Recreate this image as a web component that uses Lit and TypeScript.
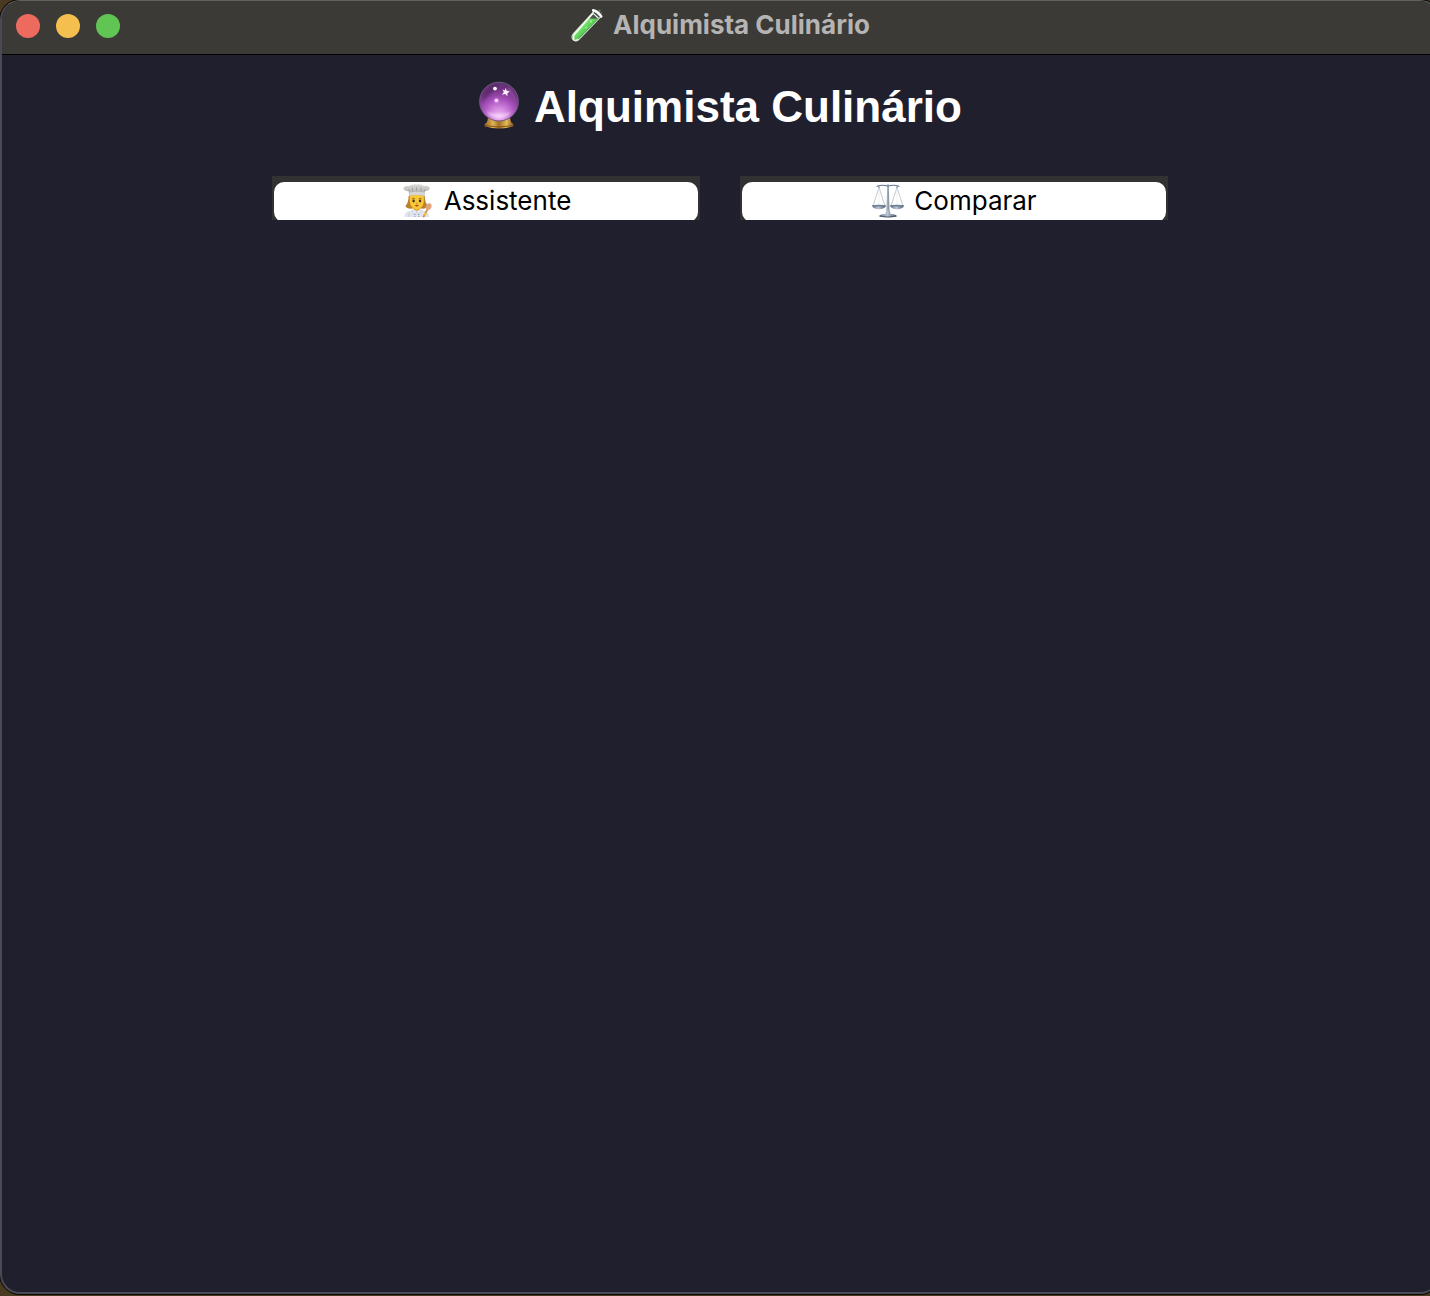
import { LitElement, html, css } from "lit";
import { customElement } from "lit/decorators.js";

const testTube = html`
  <svg class="icon icon-bar" viewBox="0 0 34 34" aria-hidden="true">
    <defs>
      <linearGradient id="tube" x1="9" y1="15" x2="18" y2="24" gradientUnits="userSpaceOnUse">
        <stop offset="0" stop-color="#a9ee98" />
        <stop offset="0.4" stop-color="#74e169" />
        <stop offset="1" stop-color="#4cc24a" />
      </linearGradient>
    </defs>
    <path d="M24.5 2.8 31 8.6 8.6 31.8Q5.6 34 3 31.6 1 29 3 26.2Z" fill="#4b544a" stroke="#cfe3cd" stroke-width="1.1" />
    <path d="M19.4 10.5 28.2 10.8 8.2 31Q5.8 32.6 3.7 31 2.2 28.8 3.8 26.8Z" fill="url(#tube)" />
    <path d="M23 5.2 4.2 26.6Q2.6 28.4 3.6 30.6" fill="none" stroke="#f0fcec" stroke-width="1.7" stroke-linecap="round" />
    <path d="M8 31.4Q5.8 33.2 3.6 31.6" fill="none" stroke="#d8f6d2" stroke-width="1.6" stroke-linecap="round" />
    <path d="M23.2 2.4Q27.6 3 31.2 8.4" fill="none" stroke="#fafafa" stroke-width="2.6" stroke-linecap="round" />
    <path d="M23.4 5.6 28.4 10.2" stroke="#f0f0f0" stroke-width="1.2" />
    <circle cx="29.6" cy="2.6" r="1.1" fill="#4c8a49" />
    <circle cx="31.4" cy="5" r="0.7" fill="#4c8a49" />
    <circle cx="21" cy="13.4" r="1" fill="#b5f0aa" />
    <circle cx="16" cy="19.6" r="0.9" fill="#a5eb9a" />
  </svg>
`;

const crystalBall = html`
  <svg class="icon icon-title" viewBox="0 0 42 48" aria-hidden="true">
    <defs>
      <radialGradient id="orb" cx="21" cy="35" r="35" gradientUnits="userSpaceOnUse">
        <stop offset="0" stop-color="#f0b8f6" />
        <stop offset="0.22" stop-color="#d58be1" />
        <stop offset="0.48" stop-color="#a852bd" />
        <stop offset="0.78" stop-color="#6f2f7e" />
        <stop offset="1" stop-color="#563868" />
      </radialGradient>
      <linearGradient id="stand" x1="6" x2="36" y1="0" y2="0" gradientUnits="userSpaceOnUse">
        <stop offset="0" stop-color="#8a591d" />
        <stop offset="0.3" stop-color="#e0b452" />
        <stop offset="0.5" stop-color="#a36f22" />
        <stop offset="0.75" stop-color="#e3bb59" />
        <stop offset="1" stop-color="#80501a" />
      </linearGradient>
      <filter id="soft" x="-20%" y="-20%" width="140%" height="140%">
        <feGaussianBlur stdDeviation="1.2" />
      </filter>
    </defs>
    <path d="M10 37H32L33 41Q36 43 35.6 45.2 28 47.4 21 47.4 14 47.4 6.4 45.2 6 43 9 41Z" fill="url(#stand)" />
    <path d="M7 44.6Q21 47.4 35 44.6" fill="none" stroke="#7a4e1b" stroke-width="0.9" />
    <circle cx="21" cy="20.6" r="19.4" fill="url(#orb)" stroke="#6b5a7c" stroke-width="1" />
    <g filter="url(#soft)">
      <path d="M6 14Q11 4 21 4 16 10 10 15 6 18 4.8 22 4 18 6 14Z" fill="#4f2460" opacity="0.6" />
      <path d="M31 6Q38 12 37.4 22 34 14 28 9Z" fill="#8a519b" opacity="0.7" />
      <path d="M9 31Q13 37 21 37.4 29 37 33 31 28 33 21 33 14 33 9 31Z" fill="#fde2ff" opacity="0.6" />
    </g>
    <path d="M27.5 6.8 28.8 9.8 31.7 10.4 29.4 12.2 29.4 15.2 27.2 13 24 13.8 25.8 11 24.4 8.6 27 9.4Z" fill="#fff1ff" />
    <circle cx="17" cy="7.6" r="1.9" fill="#fff" />
    <circle cx="18.4" cy="19.4" r="3" fill="#e8a5f0" opacity="0.35" />
    <circle cx="18.4" cy="19.4" r="1.7" fill="#fbdcff" />
  </svg>
`;

const cook = html`
  <svg class="icon icon-button" viewBox="0 0 34 34" aria-hidden="true">
    <defs>
      <linearGradient id="toque" x1="0" x2="0" y1="0" y2="1">
        <stop offset="0" stop-color="#dcdcda" />
        <stop offset="0.6" stop-color="#bcbcba" />
        <stop offset="1" stop-color="#92928f" />
      </linearGradient>
    </defs>
    <path d="M7.6 12Q7.6 18.6 4.4 22 6 25.2 11 24.6H20Q25.4 25.2 27 22 23.8 18.6 23.8 12Z" fill="#b9822a" />
    <path d="M12.8 22H18.8V27H12.8Z" fill="#e9ae22" />
    <path d="M3.4 33Q3.4 28 8 27L12.6 25.4Q15.8 28 19 25.4L24 27Q28 28 28.2 33Z" fill="#e1e4eb" />
    <path d="M12.6 25.4 15.8 28 19 25.4 20.6 27 17.6 29.6 15.8 28 14 29.6 11 27Z" fill="#f5f7fb" stroke="#a9b2c5" stroke-width="0.5" />
    <path d="M8 29V33M23.6 29V33" stroke="#bcc2cf" stroke-width="0.7" />
    <circle cx="13.8" cy="30.6" r="0.65" fill="#6685b5" />
    <circle cx="17.8" cy="30.6" r="0.65" fill="#6685b5" />
    <circle cx="13.8" cy="32.5" r="0.5" fill="#6685b5" />
    <circle cx="17.8" cy="32.5" r="0.5" fill="#6685b5" />
    <path d="M8.8 11H22.8V18Q22 24.6 15.8 25 9.6 24.6 8.8 18Z" fill="#fac836" />
    <path d="M11 14.9Q12.4 13.8 13.8 14.8M17.8 14.8Q19.2 13.8 20.6 14.9" fill="none" stroke="#8a5d1c" stroke-width="0.9" />
    <ellipse cx="12.6" cy="17" rx="1.2" ry="1.4" fill="#42301c" />
    <ellipse cx="19" cy="17" rx="1.2" ry="1.4" fill="#42301c" />
    <path d="M15 19.4H16.8" stroke="#d98d20" stroke-width="0.9" />
    <path d="M13.6 21.2Q15.8 20.4 18 21.2 15.8 23.6 13.6 21.2Z" fill="#a8482a" />
    <path d="M7.6 7.2Q1.8 6.8 2.6 3.8 3.8 1.2 8.4 2 10 0 15.4 0.4 20.8-0.2 23 2 27.8 1.2 28.6 3.8 29 6.8 23.8 7.2L23.4 11.8Q15.8 10 8.2 11.8Z" fill="url(#toque)" />
    <path d="M8.2 8.6Q15.8 7 23.4 8.6V11.8Q15.8 10 8.2 11.8Z" fill="#d5d5d3" />
    <path d="M11.5 3.6V7.4M15.6 3V7.2M20 3.6V7.4M7.6 5 8.4 7.6M23.8 5 23.4 7.6" stroke="#90908d" stroke-width="0.6" />
    <path d="M27.2 24 22.6 32.6" stroke="#cf9166" stroke-width="1.9" stroke-linecap="round" />
    <ellipse cx="27.6" cy="22.6" rx="2.8" ry="3.4" fill="#e0a57c" transform="rotate(28 27.6 22.6)" />
    <path d="M22.8 29.6Q23.4 28.4 25 29L25.8 30.4Q25 31.8 23.6 31.4Z" fill="#fbc534" />
  </svg>
`;

const scales = html`
  <svg class="icon icon-button" viewBox="0 0 34 34" aria-hidden="true">
    <defs>
      <linearGradient id="metal" x1="0" x2="1" y1="0" y2="0">
        <stop offset="0" stop-color="#566678" />
        <stop offset="0.45" stop-color="#b9c9d8" />
        <stop offset="1" stop-color="#4c5a6b" />
      </linearGradient>
    </defs>
    <path d="M8 3.4 2.2 21.4M8 3.4 13.8 21.4M26 3.4 20.2 21.4M26 3.4 31.8 21.4" stroke="#a4adb8" stroke-width="0.65" />
    <path d="M8 3.4V21M26 3.4V21" stroke="#dde1e6" stroke-width="0.5" />
    <path d="M6 2.2Q11 0.4 17 2 23 0.4 28 2.2" fill="none" stroke="#65788e" stroke-width="1.2" stroke-linecap="round" />
    <path d="M8 2V4M26 2V4" stroke="#65788e" stroke-width="0.9" />
    <path d="M16.2 1H17.8L18.4 28H15.6Z" fill="url(#metal)" />
    <circle cx="17" cy="1.8" r="1.3" fill="#7890a8" />
    <path d="M0.8 21.4H15.2Q13.6 25.2 8 25.2 2.4 25.2 0.8 21.4Z" fill="url(#metal)" />
    <path d="M18.8 21.4H33.2Q31.6 25.2 26 25.2 20.4 25.2 18.8 21.4Z" fill="url(#metal)" />
    <ellipse cx="8" cy="21.6" rx="7.2" ry="0.9" fill="#6f8194" />
    <ellipse cx="26" cy="21.6" rx="7.2" ry="0.9" fill="#6f8194" />
    <path d="M15.4 26H18.6L19.6 30Q25.8 30.6 25.8 32.2 22 33.4 17 33.4 12 33.4 8.2 32.2 8.2 30.6 14.4 30Z" fill="url(#metal)" />
    <path d="M8.6 32.2Q17 33.8 25.4 32.2" fill="none" stroke="#475566" stroke-width="0.9" />
  </svg>
`;

@customElement("app-root")
export class AppRoot extends LitElement {
  static styles = css`
    :host {
      display: block;
      background: #4a3a22;
      overflow: hidden;
    }
    .window {
      box-sizing: border-box;
      min-height: calc(100vh - 2px);
      margin: 0 -10px 2px 0;
      display: flex;
      flex-direction: column;
      overflow: hidden;
      background: #201f2d;
      border: 2px solid #4a4a55;
      border-top: 1px solid #62615e;
      border-radius: 20px;
      box-shadow: 0 0 0 1px #0c0905;
    }
    .bar {
      display: grid;
      grid-template-columns: 1fr auto 1fr;
      align-items: center;
      box-sizing: border-box;
      height: 54px;
      padding-bottom: 4px;
      background: #3b3a37;
      border-bottom: 1px solid #000;
    }
    .lights {
      display: flex;
      gap: 16px;
      padding-left: 14px;
    }
    .light {
      width: 24px;
      height: 24px;
      padding: 0;
      border: 0;
      border-radius: 50%;
    }
    .close { background: #ed6a5f; }
    .minimize { background: #f5bf4f; }
    .zoom { background: #61c554; }
    .caption {
      display: flex;
      align-items: center;
      gap: 9px;
      padding-bottom: 2px;
      font: 700 26px/32px Inter, sans-serif;
      color: #b5b4b2;
    }
    .icon {
      display: block;
      flex: none;
    }
    .icon-bar { width: 34px; height: 34px; }
    .icon-title { width: 42px; height: 48px; }
    .icon-button { width: 34px; height: 34px; }
    .content {
      flex: 1;
      display: flex;
      flex-direction: column;
      align-items: center;
      gap: 43px;
      padding: 26px 20px;
    }
    .title {
      display: flex;
      align-items: flex-start;
      gap: 14px;
      margin: 0;
      font: 700 44px/52px "Liberation Sans", Arial, sans-serif;
      color: #fff;
    }
    .actions {
      display: grid;
      grid-template-columns: 1fr 1fr;
      gap: 40px;
      width: 100%;
      max-width: 896px;
    }
    .slot {
      height: 38px;
      padding: 6px 2px 0;
      overflow: hidden;
      background: #323232;
    }
    .action {
      display: flex;
      align-items: center;
      justify-content: center;
      gap: 9px;
      width: 100%;
      height: 40px;
      padding: 0 0 2px;
      border: 0;
      border-radius: 10px;
      background: #fff;
      color: #000;
      font: 400 26px/32px Inter, sans-serif;
    }
  `;

  render() {
    return html`
      <div class="window">
        <header class="bar">
          <div class="lights">
            <button class="light close" aria-label="Fechar"></button>
            <button class="light minimize" aria-label="Minimizar"></button>
            <button class="light zoom" aria-label="Ampliar"></button>
          </div>
          <div class="caption">${testTube}<span>Alquimista Culinário</span></div>
        </header>
        <main class="content">
          <h1 class="title">${crystalBall}<span>Alquimista Culinário</span></h1>
          <div class="actions">
            <div class="slot">
              <button class="action">${cook}<span>Assistente</span></button>
            </div>
            <div class="slot">
              <button class="action">${scales}<span>Comparar</span></button>
            </div>
          </div>
        </main>
      </div>
    `;
  }
}
